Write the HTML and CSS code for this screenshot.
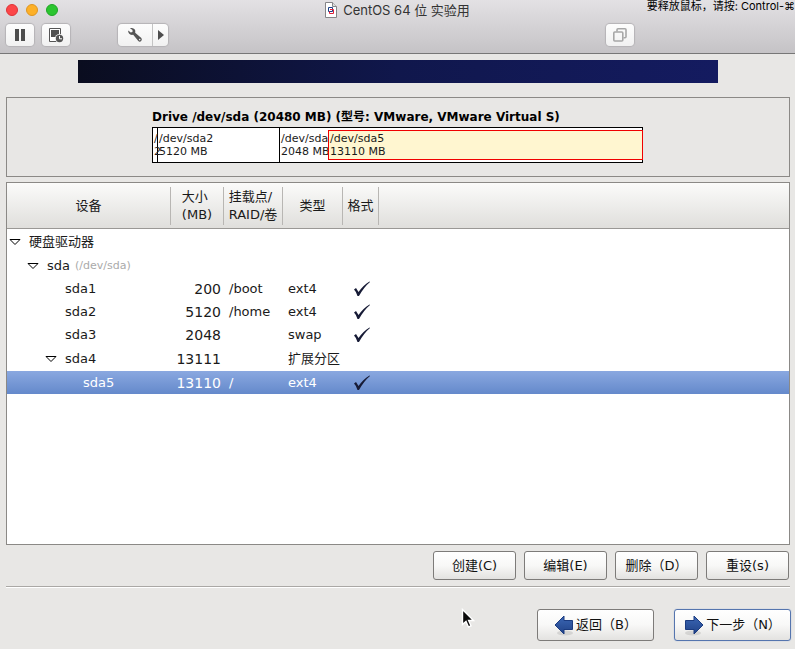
FILE: index.html
```html
<!DOCTYPE html>
<html lang="zh-CN">
<head>
<meta charset="utf-8">
<title>CentOS 64 位 实验用</title>
<link rel="stylesheet" href="styles.css">
</head>
<body>
<header class="titlebar">
  <div class="title-row">
    <div class="lights"><span class="light close"></span><span class="light minimize"></span><span class="light zoom"></span></div>
    <h1 class="title">
      <svg width="12" height="16" viewBox="0 0 12 16"><path d="M.5.5h7l4 4v11H.5z" fill="#fff" stroke="#858488"/><path d="M7.5.5v4h4" fill="#ddd" stroke="#858488"/><path d="M3.500 5.500h4v4h-4z" fill="none" stroke="#193f88"/><path d="M5 7.500h3.500v4h-4v-2" fill="none" stroke="#df2039"/></svg>
      <span>CentOS 64 位 实验用</span>
    </h1>
    <p class="hint">要释放鼠标，请按: Control-⌘</p>
  </div>
  <div class="tools">
    <button class="tool" aria-label="暂停"><svg width="12" height="12" viewBox="0 0 12 12"><path d="M1 0h4v12H1zM7 0h4v12H7z" fill="#4d4d4d"/></svg></button>
    <button class="tool" aria-label="快照"><svg width="16" height="16" viewBox="0 0 16 16"><path d="M1.500 1.500h11v13h-11z" fill="#fff" stroke="#555"/><path d="M3 3h8v7H3z" fill="#505050"/><circle cx="11.500" cy="11.500" r="4.500" fill="#f5f5f5"/><circle cx="11.500" cy="11.500" r="3.700" fill="#555"/><path d="M11.500 9v2.800H14" fill="none" stroke="#fff"/></svg></button>
    <div class="split">
      <button class="tool wide" aria-label="设置"><svg width="16" height="16" viewBox="0 0 16 16"><path d="M3 1.200C5.300.5 7.800 1.500 8.300 3.800L8.200 5.700 14.300 11.100Q15.500 12.700 14.200 14.100 12.600 15.300 11.100 13.800L6.200 7.800C4 8.400 1.600 7 1.200 4.500L1.300 3.600 3.700 5.500 5.500 4.900 5.500 3.100Z" fill="#555"/><circle cx="12.700" cy="12.600" r=".8" fill="#eee"/></svg></button>
      <button class="tool narrow" aria-label="更多"><svg width="6" height="10" viewBox="0 0 6 10"><path d="M0 0l6 5-6 5z" fill="#4d4d4d"/></svg></button>
    </div>
    <button class="tool windows" aria-label="窗口"><svg width="14" height="14" viewBox="0 0 14 14" fill="none" stroke="#a7a7a7" stroke-width="1.600"><rect x=".8" y="4" width="9" height="9" rx="1"/><path d="M4 3.500V1.800q0-1 1-1h7q1 0 1 1v7q0 1-1 1h-1.500"/></svg></button>
  </div>
</header>
<main class="installer">
  <div class="banner"></div>
  <section class="drive">
    <div class="drive-inner">
      <h2>Drive /dev/sda (20480 MB) (型号: VMware, VMware Virtual S)</h2>
      <div class="disk">
        <div class="part line">/<br>2</div>
        <div class="part line">/dev/sda2<br>5120 MB</div>
        <div class="part">/dev/sda<br>2048 MB</div>
        <div class="extended"><div class="part selected">/dev/sda5<br>13110 MB</div></div>
      </div>
    </div>
  </section>
  <section class="tree">
    <table>
      <colgroup><col class="c-device"><col class="c-size"><col class="c-mount"><col class="c-type"><col class="c-format"><col></colgroup>
      <thead>
        <tr><th><span>设备</span></th><th><span class="left">大小<br>(MB)</span></th><th><span class="left">挂载点/<br>RAID/卷</span></th><th><span>类型</span></th><th><span>格式</span></th><td></td></tr>
      </thead>
      <tbody>
        <tr class="tall"><td><div class="node"><svg class="arrow" viewBox="0 0 12 8"><path d="M1 1.500h10L6 6.500z"/></svg>硬盘驱动器</div></td><td></td><td></td><td></td><td></td><td></td></tr>
        <tr><td><div class="node l1"><svg class="arrow" viewBox="0 0 12 8"><path d="M1 1.500h10L6 6.500z"/></svg>sda <small>(/dev/sda)</small></div></td><td></td><td></td><td></td><td></td><td></td></tr>
        <tr><td><div class="leaf">sda1</div></td><td class="num">200</td><td>/boot</td><td>ext4</td><td class="mark"><svg viewBox="0 0 18 16"><path d="M1 8.500l2-1.500 2.500 4Q10.500 4 16.500.5l.5.5Q11 6 6 15H4.500Q3.500 11 1 8.500z"/></svg></td><td></td></tr>
        <tr><td><div class="leaf">sda2</div></td><td class="num">5120</td><td>/home</td><td>ext4</td><td class="mark"><svg viewBox="0 0 18 16"><path d="M1 8.500l2-1.500 2.500 4Q10.500 4 16.500.5l.5.5Q11 6 6 15H4.500Q3.500 11 1 8.500z"/></svg></td><td></td></tr>
        <tr><td><div class="leaf">sda3</div></td><td class="num">2048</td><td></td><td>swap</td><td class="mark"><svg viewBox="0 0 18 16"><path d="M1 8.500l2-1.500 2.500 4Q10.500 4 16.500.5l.5.5Q11 6 6 15H4.500Q3.500 11 1 8.500z"/></svg></td><td></td></tr>
        <tr class="tall"><td><div class="node l2"><svg class="arrow" viewBox="0 0 12 8"><path d="M1 1.500h10L6 6.500z"/></svg>sda4</div></td><td class="num">13111</td><td></td><td>扩展分区</td><td></td><td></td></tr>
        <tr class="current"><td><div class="leaf deep">sda5</div></td><td class="num">13110</td><td>/</td><td>ext4</td><td class="mark"><svg viewBox="0 0 18 16"><path d="M1 8.500l2-1.500 2.500 4Q10.500 4 16.500.5l.5.5Q11 6 6 15H4.500Q3.500 11 1 8.500z"/></svg></td><td></td></tr>
      </tbody>
    </table>
  </section>
  <div class="actions">
    <button class="btn">创建(C)</button><button class="btn">编辑(E)</button><button class="btn">删除（D）</button><button class="btn">重设(s)</button>
  </div>
  <hr>
  <footer class="nav">
    <button class="btn big"><svg width="20" height="22" viewBox="0 0 20 22"><defs><linearGradient id="blue" x2="0" y2="1"><stop stop-color="#3b67b5"/><stop offset="1" stop-color="#204287"/></linearGradient></defs><ellipse cx="11" cy="19" rx="8" ry="2.500" fill="#000" opacity=".1"/><path d="M1 11L10 2v4.500h8.500v9H10V20z" fill="url(#blue)" stroke="#1b3b80"/></svg>返回（B）</button>
    <button class="btn big focus"><svg width="20" height="22" viewBox="0 0 20 22"><ellipse cx="9" cy="19" rx="8" ry="2.500" fill="#000" opacity=".1"/><path d="M19 11L10 2v4.500H1.500v9H10V20z" fill="url(#blue)" stroke="#1b3b80"/></svg>下一步（N）</button>
  </footer>
  <svg class="cursor" width="14" height="21" viewBox="0 0 14 21"><path d="M1.500 1.500v15l3.500-3 2.500 5.500 2.500-1.200L7.600 12.500h4.900z" fill="#0a0a0a" stroke="#fff" stroke-width="1.400"/></svg>
</main>
</body>
</html>
```
FILE: styles.css
```css
* { box-sizing: border-box; }

body {
  margin: 0;
  min-height: 100vh;
  display: flex;
  flex-direction: column;
  overflow: hidden;
  background: #e8e7e5;
  color: #1a1a1a;
  font: 13px/18px "DejaVu Sans", "Noto Sans CJK SC", sans-serif;
}

button { font: inherit; color: #111; padding: 0; }
h1, h2, p { margin: 0; }

/* Window title bar */
.titlebar {
  height: 54px;
  background: linear-gradient(#e3e1e4, #c5c3c6);
  border-bottom: 1px solid #777;
}
.title-row {
  display: grid;
  grid-template-columns: 1fr auto 1fr;
  height: 20px;
}
.lights { display: flex; gap: 8px; padding: 4px 0 0 6px; }
.light { width: 12px; height: 12px; border-radius: 50%; border: 1px solid; }
.close { background: #fc4648; border-color: #df3338; }
.minimize { background: #fdb027; border-color: #df9620; }
.zoom { background: #2bc52f; border-color: #20a526; }
.title {
  display: flex;
  align-items: center;
  gap: 6px;
  font: 13px/20px Inter, "Noto Sans CJK SC", sans-serif;
  color: #333;
  white-space: nowrap;
}
.hint {
  justify-self: end;
  font: 11px/13px Inter, "Noto Sans CJK SC", "DejaVu Sans", sans-serif;
  color: #000;
  white-space: nowrap;
}
.tools { display: flex; padding: 4px 161px 0 6px; }
.tool {
  width: 28px;
  height: 22px;
  display: flex;
  align-items: center;
  justify-content: center;
  border: 0;
  border-radius: 4px;
  background: linear-gradient(#fdfdfd, #f1f1f1);
  box-shadow: 0 0 1px 1px #b5b3b6;
}
.tool + .tool { margin-left: 8px; }
.split {
  display: flex;
  margin-left: 48px;
  gap: 1px;
  border-radius: 4px;
  background: #c4c4c4;
  box-shadow: 0 0 1px 1px #b5b3b6;
}
.split .tool { box-shadow: none; }
.split .wide { width: 34px; border-radius: 4px 0 0 4px; }
.split .narrow { width: 15px; margin: 0; border-radius: 0 4px 4px 0; }
.windows { margin-left: auto; }

/* Installer */
.installer {
  position: relative;
  flex: 1;
  display: flex;
  flex-direction: column;
  padding: 6px 5px 8px 6px;
}
.banner {
  height: 23px;
  margin: 0 72px;
  background: linear-gradient(90deg, #0a0d1f, #10174c 50%, #141b60);
}
.drive {
  margin-top: 14px;
  padding: 10px 0 13px;
  border: 1px solid #8b8986;
}
.drive-inner { max-width: 492px; margin: 0 auto; padding-right: 1px; }
.drive h2 {
  font-size: 12px;
  line-height: 19px;
  color: #000;
  white-space: nowrap;
}
.disk {
  display: grid;
  grid-template-columns: 5fr 122fr 48fr minmax(0, 315fr);
  height: 36px;
  border: 1px solid #000;
  border-right: 0;
  background: #fff;
}
.part {
  min-width: 0;
  padding: 4px 0 0 1px;
  font-size: 11px;
  line-height: 13px;
  white-space: nowrap;
}
.line { border-right: 1px solid #000; }
.extended { padding: 2px 0; border-right: 1px solid #000; }
.selected {
  height: 30px;
  margin-right: -1px;
  padding-top: 1px;
  border: 1px solid #f00000;
  background: #fff6d0;
}

/* Device tree */
.tree {
  flex: 1;
  margin-top: 5px;
  border: 1px solid #8b8986;
  background: #fff;
}
table { width: 100%; table-layout: fixed; border-collapse: separate; border-spacing: 0; }
.c-device { width: 164px; }
.c-size { width: 53px; }
.c-mount { width: 59px; }
.c-type { width: 60px; }
.c-format { width: 36px; }
thead tr { height: 46px; background: linear-gradient(#fbfbfa, #dfdedb); }
thead th, thead td { border-bottom: 1px solid #9a9895; }
th { padding: 4px 0 3px; font-weight: normal; white-space: nowrap; }
th span {
  display: flex;
  align-items: center;
  justify-content: center;
  height: 38px;
  border-right: 1px solid #b8b6b3;
}
th .left { text-align: left; }
tbody tr { height: 23px; }
tbody .tall { height: 25px; }
tbody td { padding: 0 0 0 5px; white-space: nowrap; }
tbody td:first-child { padding: 0; }
.node { display: flex; align-items: center; padding-left: 2px; }
.l1 { padding-left: 20px; }
.l2 { padding-left: 38px; }
.arrow { width: 12px; height: 8px; margin-right: 8px; fill: #fff; stroke: #000; }
.leaf { padding-left: 58px; }
.deep { padding-left: 76px; }
small { margin-left: 5px; font-size: 11px; color: #aaa; }
tbody .num { padding: 0 3px 0 0; text-align: right; font-size: 14px; }
tbody .mark { padding: 0 0 0 10px; }
.mark svg { display: block; width: 18px; height: 16px; fill: #171b36; }
.current { color: #fff; background: linear-gradient(#8aa8e0, #6489cb); }

/* Buttons */
.actions { display: flex; justify-content: flex-end; gap: 8px; padding: 6px 1px 6px 0; }
.btn {
  width: 83px;
  height: 29px;
  border: 1px solid #7d7b79;
  border-radius: 3px;
  background: linear-gradient(#fff, #f8f8f7 50%, #e3e2e0);
  white-space: nowrap;
}
hr {
  width: 100%;
  margin: 0;
  border: 0;
  border-top: 1px solid #aaa8a5;
  border-bottom: 1px solid #fff;
}
.nav { display: flex; justify-content: flex-end; gap: 20px; margin: 21px -1px 0 0; }
.big {
  width: 117px;
  height: 32px;
  display: flex;
  align-items: center;
  justify-content: center;
  gap: 2px;
}
.focus { border-color: #5575ae; box-shadow: 0 0 1px #7b9bd1; }

.cursor { position: absolute; left: 461px; top: 554px; }
```
